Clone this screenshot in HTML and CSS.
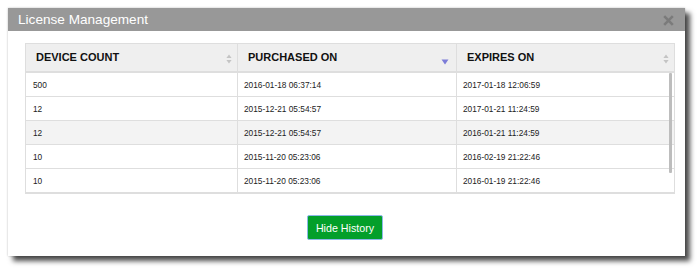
FILE: index.html
```html
<!DOCTYPE html>
<html>
<head>
<meta charset="utf-8">
<link rel="stylesheet" href="styles.css">
</head>
<body>
<div class="dialog">
  <div class="titlebar">
    <span class="title">License Management</span>
    <svg class="close" width="11" height="11" viewBox="0 0 11 11"><path d="M1.2 1.2 L9.8 9.8 M9.8 1.2 L1.2 9.8" stroke="#7b7b7b" stroke-width="2.6" stroke-linecap="butt"/></svg>
  </div>
  <div class="content">
    <div class="table-wrap">
      <table class="grid">
        <colgroup><col class="c1"><col class="c2"><col class="c3"></colgroup>
        <thead>
          <tr>
            <th><div class="th-in"><span>DEVICE COUNT</span>
              <svg class="sort" width="6" height="10" viewBox="0 0 6 10"><path d="M3 0.5 L5.6 4 H0.4 Z M3 9.5 L5.6 6 H0.4 Z" fill="#c4c4c4"/></svg></div></th>
            <th><div class="th-in"><span>PURCHASED ON</span>
              <svg class="sort sort-down" width="8" height="6" viewBox="0 0 8 6"><path d="M0.5 0.5 H7.5 L4 5.5 Z" fill="#7d7dd8"/></svg></div></th>
            <th><div class="th-in"><span>EXPIRES ON</span>
              <svg class="sort" width="6" height="10" viewBox="0 0 6 10"><path d="M3 0.5 L5.6 4 H0.4 Z M3 9.5 L5.6 6 H0.4 Z" fill="#c4c4c4"/></svg></div></th>
          </tr>
        </thead>
        <tbody>
          <tr><td>500</td><td>2016-01-18 06:37:14</td><td>2017-01-18 12:06:59</td></tr>
          <tr><td>12</td><td>2015-12-21 05:54:57</td><td>2017-01-21 11:24:59</td></tr>
          <tr class="alt"><td>12</td><td>2015-12-21 05:54:57</td><td>2016-01-21 11:24:59</td></tr>
          <tr><td>10</td><td>2015-11-20 05:23:06</td><td>2016-02-19 21:22:46</td></tr>
          <tr><td>10</td><td>2015-11-20 05:23:06</td><td>2016-01-19 21:22:46</td></tr>
        </tbody>
      </table>
      <div class="scrollthumb"></div>
    </div>
    <div class="actions">
      <button class="btn">Hide History</button>
    </div>
  </div>
</div>
</body>
</html>
```
FILE: styles.css
```css
html, body {
  margin: 0;
  padding: 0;
  background: #fff;
}
body {
  font-family: "Liberation Sans", Arial, sans-serif;
  min-height: 270px;
}
.dialog {
  margin: 8px 0 14px 8px;
  width: 677px;
  height: 248px;
  background: #fff;
  box-shadow: 0 0 2px rgba(0, 0, 0, 0.25), 5px 5px 5px rgba(0, 0, 0, 0.7);
  display: flex;
  flex-direction: column;
}
.titlebar {
  height: 23px;
  background: #989898;
  display: flex;
  align-items: center;
  justify-content: space-between;
  padding: 0 11px 0 10px;
}
.title {
  color: #fff;
  font-size: 13.6px;
  line-height: 23px;
}
.close {
  display: block;
  margin-top: 1px;
}
.content {
  padding: 12px 11px 0 17px;
  display: flex;
  flex-direction: column;
}
.table-wrap {
  position: relative;
  width: 649px;
}
.grid {
  width: 649px;
  border-collapse: collapse;
  table-layout: fixed;
  border: 1px solid #dedede;
  border-bottom: 2px solid #dedede;
}
.c1 { width: 212px; }
.c2 { width: 219px; }
.c3 { width: 218px; }
.grid th {
  height: 27px;
  background: #efefef;
  border-left: 1px solid #dedede;
  border-bottom: 2px solid #dedede;
  padding: 0 4px 0 10px;
  text-align: left;
  font-size: 11px;
  font-weight: bold;
  color: #111;
}
.th-in {
  display: flex;
  align-items: center;
  justify-content: space-between;
}
.th-in span {
  margin-top: -1px;
}
.sort {
  display: block;
  margin-top: 3px;
  margin-right: 1px;
}
.sort-down {
  margin-top: 8px;
  margin-right: 3px;
}
.grid td {
  height: 23px;
  padding: 0 6px 0 7px;
  font-size: 8.3px;
  color: #222;
  border-left: 1px solid #dedede;
  border-top: 1px solid #dedede;
}
.grid td:nth-child(2),
.grid td:nth-child(3) {
  padding-left: 6px;
}
.grid tr.alt td {
  background: #f3f3f3;
}
.scrollthumb {
  position: absolute;
  right: 2px;
  top: 30px;
  width: 3px;
  height: 100px;
  background: #bdbdbd;
  border-radius: 1px;
}
.actions {
  display: flex;
  justify-content: center;
  padding-top: 21px;
  padding-right: 9px;
}
.btn {
  width: 76px;
  height: 25px;
  background: #039f2a;
  color: #fff;
  border: 1px solid #8db8e8;
  border-radius: 2px;
  font-family: "Liberation Sans", Arial, sans-serif;
  font-size: 10.7px;
  padding: 0;
}
```
